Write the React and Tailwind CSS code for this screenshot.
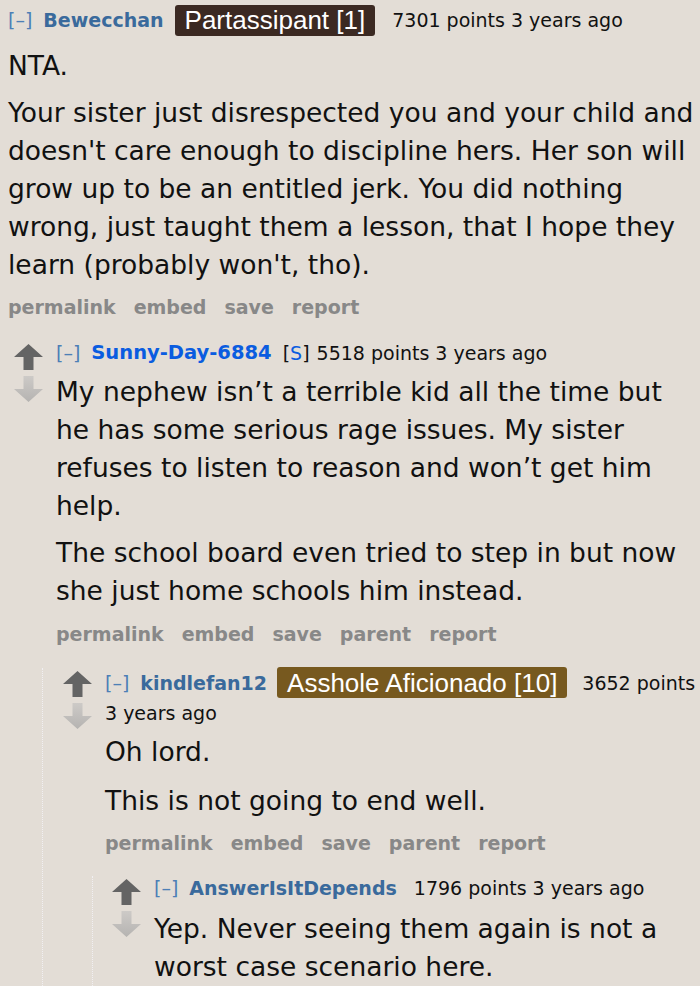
import React from 'react';

const bodyFont = { fontFamily: '"DejaVu Sans", Verdana, sans-serif' };

const UpArrow = () => (
  <svg width="29" height="26" viewBox="0 0 29 26" className="block">
    <path d="M14.5 0 L29 13 L19.5 13 L19.5 26 L9.5 26 L9.5 13 L0 13 Z" fill="#646464" />
  </svg>
);

const DownArrow = () => (
  <svg width="29" height="26" viewBox="0 0 29 26" className="block">
    <defs>
      <linearGradient id="downFade" x1="0" y1="0" x2="0" y2="1">
        <stop offset="0" stopColor="#cdcac7" />
        <stop offset="1" stopColor="#b5b3b1" />
      </linearGradient>
    </defs>
    <path d="M9.5 0 L19.5 0 L19.5 13 L29 13 L14.5 26 L0 13 L9.5 13 Z" fill="url(#downFade)" />
  </svg>
);

const Votes = () => (
  <div className="flex w-[42px] shrink-0 flex-col gap-[6px] pt-[3px]">
    <UpArrow />
    <DownArrow />
  </div>
);

const Flair = ({ text, color }) => (
  <span
    className={`inline-flex h-[31px] items-center rounded-[3px] px-[10px] text-[26px] leading-none text-white ${color}`}
    style={{ fontFamily: '"Liberation Sans", Arial, sans-serif' }}
  >
    {text}
  </span>
);

const Expand = () => <span className="text-[#4d7fb6]">[–]</span>;

const Lines = ({ lines }) => (
  <p className="text-[26.5px] leading-[38px] text-[#111]">
    {lines.map((l, i) => (
      <span key={i} className="block whitespace-nowrap">{l}</span>
    ))}
  </p>
);

const Body = ({ paragraphs, className = '' }) => (
  <div className={`flex flex-col ${className}`}>
    {paragraphs.map((p, i) => (
      <Lines key={i} lines={p} />
    ))}
  </div>
);

const Actions = ({ items, className = '' }) => (
  <div className={`flex h-[24px] items-center gap-[18px] text-[19px] font-bold text-[#888888] ${className}`}>
    {items.map(a => (
      <span key={a}>{a}</span>
    ))}
  </div>
);

export default function App() {
  return (
    <div className="min-h-[986px] overflow-hidden bg-[#e3ddd6] px-2 pt-[5px]" style={bodyFont}>
      {/* top level comment */}
      <div className="flex h-[31px] items-center whitespace-nowrap text-[19px] text-[#111]">
        <Expand />
        <span className="ml-[11px] font-bold text-[#3a6a9c]">Bewecchan</span>
        <span className="ml-[11px]">
          <Flair text="Partassipant [1]" color="bg-[#3b2922]" />
        </span>
        <span className="ml-[17px]">7301 points 3 years ago</span>
      </div>

      <Body
        className="mt-[11px] gap-[9px]"
        paragraphs={[
          ['NTA.'],
          [
            'Your sister just disrespected you and your child and',
            "doesn't care enough to discipline hers. Her son will",
            'grow up to be an entitled jerk. You did nothing',
            "wrong, just taught them a lesson, that I hope they",
            "learn (probably won't, tho).",
          ],
        ]}
      />
      <Actions className="mt-[11px]" items={['permalink', 'embed', 'save', 'report']} />

      {/* reply from OP */}
      <div className="mt-[22px] pl-[6px]">
        <div className="flex">
          <Votes />
          <div className="min-w-0 flex-1">
            <div className="flex h-[24px] items-center whitespace-nowrap text-[19px] text-[#111]">
              <Expand />
              <span className="ml-[11px] text-[19.5px] font-bold text-[#0a5ce0]">Sunny-Day-6884</span>
              <span className="ml-[11px]">
                [<span className="text-[#0a5ce0]">S</span>]
              </span>
              <span className="ml-[7px]">5518 points 3 years ago</span>
            </div>
            <Body
              className="mt-[8px] gap-[9px]"
              paragraphs={[
                [
                  'My nephew isn’t a terrible kid all the time but',
                  'he has some serious rage issues. My sister',
                  'refuses to listen to reason and won’t get him',
                  'help.',
                ],
                ['The school board even tried to step in but now', 'she just home schools him instead.'],
              ]}
            />
            <Actions className="mt-[12px]" items={['permalink', 'embed', 'save', 'parent', 'report']} />
          </div>
        </div>

        {/* nested replies */}
        <div className="ml-[28px] mt-[22px] border-l border-dotted border-[#f1eff2] pl-[20px]">
          <div className="flex">
            <Votes />
            <div className="min-w-0 flex-1">
              <div className="flex h-[30px] items-center whitespace-nowrap text-[19px] text-[#111]">
                <Expand />
                <span className="ml-[11px] font-bold text-[#3a6a9c]">kindlefan12</span>
                <span className="ml-[10px]">
                  <Flair text="Asshole Aficionado [10]" color="bg-[#77591f]" />
                </span>
                <span className="ml-[15px]">3652 points</span>
              </div>
              <div className="mt-[3px] flex h-[24px] items-center text-[19px] text-[#111]">3 years ago</div>
              <Body className="mt-[8px] gap-[11px]" paragraphs={[['Oh lord.'], ['This is not going to end well.']]} />
              <Actions className="mt-[11px]" items={['permalink', 'embed', 'save', 'parent', 'report']} />
            </div>
          </div>

          <div className="ml-[29px] mt-[21px] border-l border-dotted border-[#f1eff2] pb-[40px] pl-[19px]">
            <div className="flex">
              <Votes />
              <div className="min-w-0 flex-1">
                <div className="flex h-[24px] items-center whitespace-nowrap text-[19px] text-[#111]">
                  <Expand />
                  <span className="ml-[11px] font-bold text-[#3a6a9c]">AnswerIsItDepends</span>
                  <span className="ml-[17px]">1796 points 3 years ago</span>
                </div>
                <Body
                  className="mt-[10px] gap-[9px]"
                  paragraphs={[['Yep. Never seeing them again is not a', 'worst case scenario here.']]}
                />
              </div>
            </div>
          </div>
        </div>
      </div>
    </div>
  );
}
